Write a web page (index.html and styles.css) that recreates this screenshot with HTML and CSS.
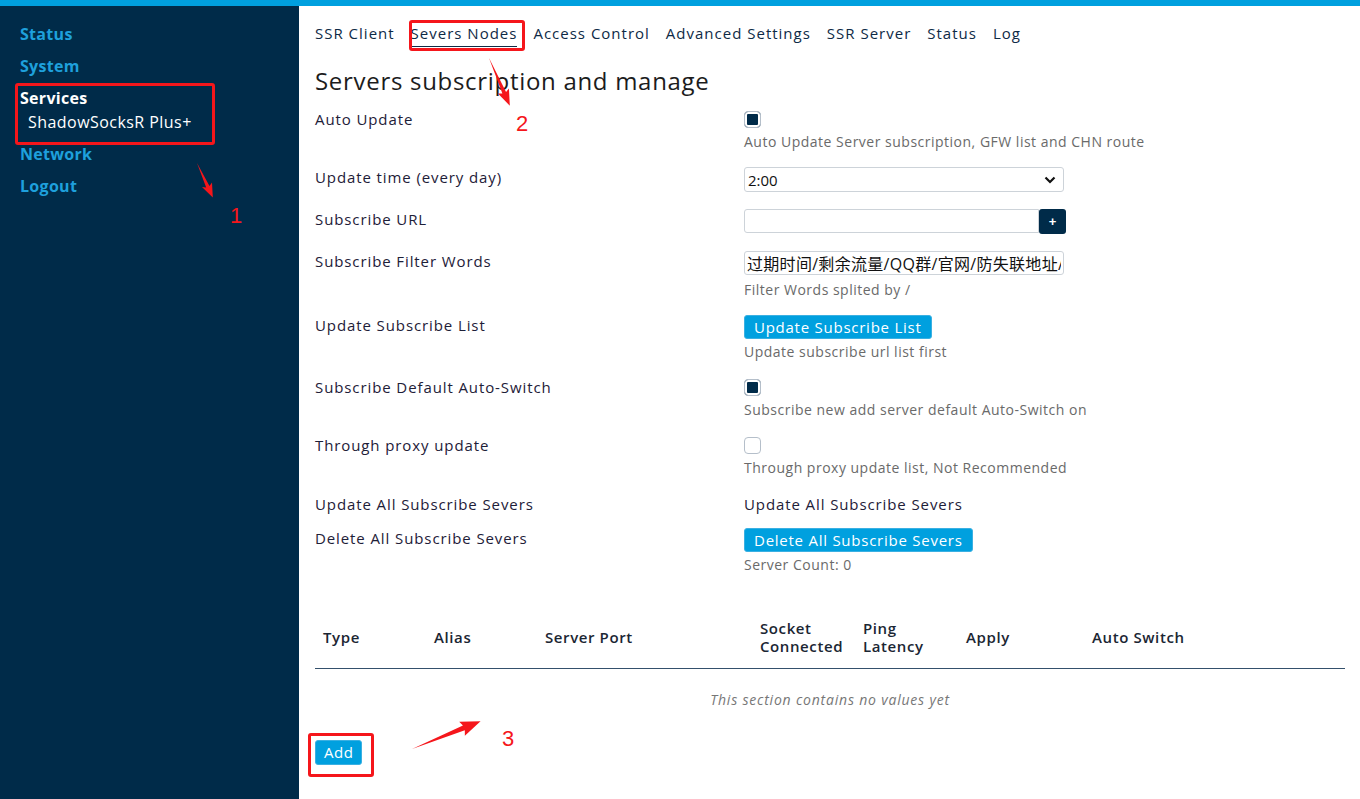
FILE: index.html
```html
<!DOCTYPE html>
<html>
<head>
<meta charset="utf-8">
<link rel="stylesheet" href="styles.css">
</head>
<body>
<div class="topbar"></div>
<div class="layout">
  <nav class="sidebar">
    <a class="nav-item">Status</a>
    <a class="nav-item">System</a>
    <div class="nav-group">
      <a class="nav-item active">Services</a>
      <a class="nav-sub">ShadowSocksR Plus+</a>
    </div>
    <a class="nav-item">Network</a>
    <a class="nav-item">Logout</a>
  </nav>
  <main class="main">
    <ul class="tabs">
      <li class="tab">SSR Client</li>
      <li class="tab active">Severs Nodes</li>
      <li class="tab">Access Control</li>
      <li class="tab">Advanced Settings</li>
      <li class="tab">SSR Server</li>
      <li class="tab">Status</li>
      <li class="tab">Log</li>
    </ul>
    <h2 class="title">Servers subscription and manage</h2>

    <div class="form">
      <div class="row">
        <div class="label">Auto Update</div>
        <div class="field">
          <div class="ctrl"><input type="checkbox" class="cb" checked></div>
          <div class="desc">Auto Update Server subscription, GFW list and CHN route</div>
        </div>
      </div>
      <div class="row">
        <div class="label">Update time (every day)</div>
        <div class="field">
          <div class="select"><span>2:00</span>
            <svg class="chev" width="12" height="8" viewBox="0 0 12 8"><path d="M1.5 1.5 L6 6 L10.5 1.5" fill="none" stroke="#111" stroke-width="2.2"/></svg>
          </div>
        </div>
      </div>
      <div class="row">
        <div class="label">Subscribe URL</div>
        <div class="field">
          <div class="url-group"><input class="input url" type="text"><button class="plus">+</button></div>
        </div>
      </div>
      <div class="row">
        <div class="label">Subscribe Filter Words</div>
        <div class="field">
          <input class="input cjk" type="text" value="过期时间/剩余流量/QQ群/官网/防失联地址/|">
          <div class="desc after-input">Filter Words splited by /</div>
        </div>
      </div>
      <div class="row">
        <div class="label">Update Subscribe List</div>
        <div class="field">
          <button class="btn">Update Subscribe List</button>
          <div class="desc">Update subscribe url list first</div>
        </div>
      </div>
      <div class="row">
        <div class="label">Subscribe Default Auto-Switch</div>
        <div class="field">
          <div class="ctrl"><input type="checkbox" class="cb" checked></div>
          <div class="desc">Subscribe new add server default Auto-Switch on</div>
        </div>
      </div>
      <div class="row loose">
        <div class="label">Through proxy update</div>
        <div class="field">
          <div class="ctrl"><input type="checkbox" class="cb"></div>
          <div class="desc">Through proxy update list, Not Recommended</div>
        </div>
      </div>
      <div class="row tight">
        <div class="label">Update All Subscribe Severs</div>
        <div class="field"><div class="value">Update All Subscribe Severs</div></div>
      </div>
      <div class="row">
        <div class="label">Delete All Subscribe Severs</div>
        <div class="field">
          <button class="btn">Delete All Subscribe Severs</button>
          <div class="desc">Server Count: 0</div>
        </div>
      </div>
    </div>

    <div class="table">
      <div class="thead">
        <div class="th">Type</div>
        <div class="th">Alias</div>
        <div class="th">Server Port</div>
        <div class="th">Socket<br>Connected</div>
        <div class="th">Ping<br>Latency</div>
        <div class="th">Apply</div>
        <div class="th">Auto Switch</div>
      </div>
      <div class="empty">This section contains no values yet</div>
    </div>
    <button class="btn add">Add</button>
  </main>
</div>

<div class="annot box box-services"></div>
<div class="annot box box-tab"></div>
<div class="annot box box-add"></div>
<div class="annot num num1">1</div>
<div class="annot num num2">2</div>
<div class="annot num num3">3</div>
<svg class="arrows" width="1360" height="799" viewBox="0 0 1360 799">
  <g fill="#f5161b">
    <polygon transform="translate(197,163) rotate(65.4)" points="0,0 26,-1.8 24,-5.5 38,0 24,5.5 26,1.8"/>
    <polygon transform="translate(489,58) rotate(66.4)" points="0,0 38,-2 36,-6 52,0 36,6 38,2"/>
    <polygon transform="translate(412,749) rotate(-22.1)" points="0,0 56,-2.5 54,-7.5 74,0 54,7.5 56,2.5"/>
  </g>
</svg>
</body>
</html>
```
FILE: styles.css
```css
* { box-sizing: border-box; }
html, body { margin: 0; padding: 0; }
body {
  font-family: "Open Sans", "Noto Sans CJK SC", sans-serif;
  color: #1b2633;
  background: #fff;
  position: relative;
  height: 799px;
  overflow: hidden;
}
.topbar { height: 6px; background: #00a0df; }
.layout { display: flex; height: 793px; }

.sidebar {
  width: 299px;
  flex: none;
  background: #002b49;
  padding: 18px 0 0 20px;
  display: flex;
  flex-direction: column;
}
.nav-item {
  display: block;
  font-size: 16px;
  font-weight: 700;
  line-height: 20px;
  height: 32px;
  color: #1ea0dc;
  letter-spacing: 0.3px;
}
.nav-group .nav-item { height: 24px; }
.nav-item.active { color: #fff; }
.nav-sub {
  display: block;
  color: #fff;
  font-size: 16px;
  line-height: 20px;
  height: 32px;
  padding-left: 8px;
  letter-spacing: 0.45px;
}

.main { flex: 1; padding: 0 15px 0 16px; }
.tabs {
  list-style: none;
  margin: 0;
  padding: 17px 0 0 0;
  display: flex;
  gap: 16px;
}
.tab {
  font-size: 15px;
  line-height: 20px;
  color: #0e2a46;
  letter-spacing: 1px;
  padding-bottom: 3px;
  border-bottom: 1px solid transparent;
}
.tab.active { border-bottom-color: #0e2a46; }
.title {
  margin: 19px 0 0 0;
  font-size: 24px;
  font-weight: 500;
  line-height: 30px;
  letter-spacing: 0.7px;
  color: #1c1c1c;
}

.form { margin-top: 13px; }
.row { display: flex; margin-bottom: 17px; }
.row.loose { margin-bottom: 18px; }
.row.tight { margin-bottom: 14px; }
.label {
  width: 429px;
  flex: none;
  font-size: 15px;
  line-height: 20px;
  letter-spacing: 0.9px;
  color: #1e2038;
}
.field { flex: 1; }
.ctrl { height: 20px; display: flex; align-items: center; }
.cb {
  appearance: none;
  -webkit-appearance: none;
  margin: 0;
  width: 17px;
  height: 17px;
  border: 1px solid #b5bfca;
  border-radius: 4px;
  background: #fff;
}
.cb:checked {
  background: #002b49;
  box-shadow: inset 0 0 0 2px #fff;
}
.desc {
  font-size: 14px;
  line-height: 20px;
  letter-spacing: 0.5px;
  color: #6a6a6a;
  margin-top: 3px;
  margin-bottom: -2px;
}
.desc.after-input { margin-top: 5px; }
.select {
  width: 320px;
  height: 25px;
  border: 1px solid #cdd3d9;
  border-radius: 3px;
  display: flex;
  align-items: center;
  justify-content: space-between;
  padding: 0 7px 0 3px;
  font-size: 15px;
  color: #111;
}
.url-group { display: flex; align-items: flex-start; height: 25px; }
.input {
  height: 24px;
  border: 1px solid #cdd3d9;
  border-radius: 3px;
  font-family: "Open Sans", "Noto Sans CJK SC", sans-serif;
  font-size: 15px;
  padding: 0 2px;
  margin: 0;
  color: #111;
  outline: none;
}
.url { width: 295px; border-radius: 3px 0 0 3px; }
.cjk { width: 320px; font-size: 16px; letter-spacing: 0.3px; }
.plus {
  width: 27px;
  height: 25px;
  margin: 0;
  border: none;
  border-radius: 3px;
  background: #002b49;
  color: #fff;
  font-size: 13px;
  font-weight: 700;
  padding: 0;
}
.btn {
  display: block;
  height: 24px;
  margin: 0;
  padding: 0 9px;
  border: 1px solid #3ab0e2;
  border-radius: 3px;
  background: #00a0df;
  color: #fff;
  font-family: "Open Sans", sans-serif;
  font-size: 15px;
  letter-spacing: 0.75px;
  line-height: 21px;
}
.value { font-size: 15px; line-height: 20px; letter-spacing: 0.9px; color: #1e2038; }

.table { margin-top: 32px; }
.thead {
  display: grid;
  grid-template-columns: 111px 111px 215px 103px 103px 126px 1fr;
  height: 64px;
  align-items: center;
  border-bottom: 1px solid #34506c;
  padding-left: 8px;
}
.th { font-size: 15px; font-weight: 600; line-height: 18px; letter-spacing: 0.6px; color: #1b2633; }
.empty {
  height: 60px;
  display: flex;
  align-items: center;
  justify-content: center;
  font-style: italic;
  font-size: 14px;
  letter-spacing: 0.8px;
  color: #777;
}
.add { margin-top: 11px; padding: 0 8px; height: 25px; letter-spacing: 0.5px; }

.annot { position: absolute; }
.box { border: 3px solid #f5161b; border-radius: 3px; }
.box-services { left: 15px; top: 83px; width: 200px; height: 62px; }
.box-tab { left: 409px; top: 20px; width: 116px; height: 31px; }
.box-add { left: 308px; top: 733px; width: 66px; height: 44px; }
.num { color: #f5161b; font-family: "Liberation Sans", sans-serif; font-size: 22px; line-height: 22px; }
.num1 { left: 230px; top: 205px; }
.num2 { left: 516px; top: 113px; }
.num3 { left: 502px; top: 728px; }
.arrows { position: absolute; left: 0; top: 0; pointer-events: none; }
```
